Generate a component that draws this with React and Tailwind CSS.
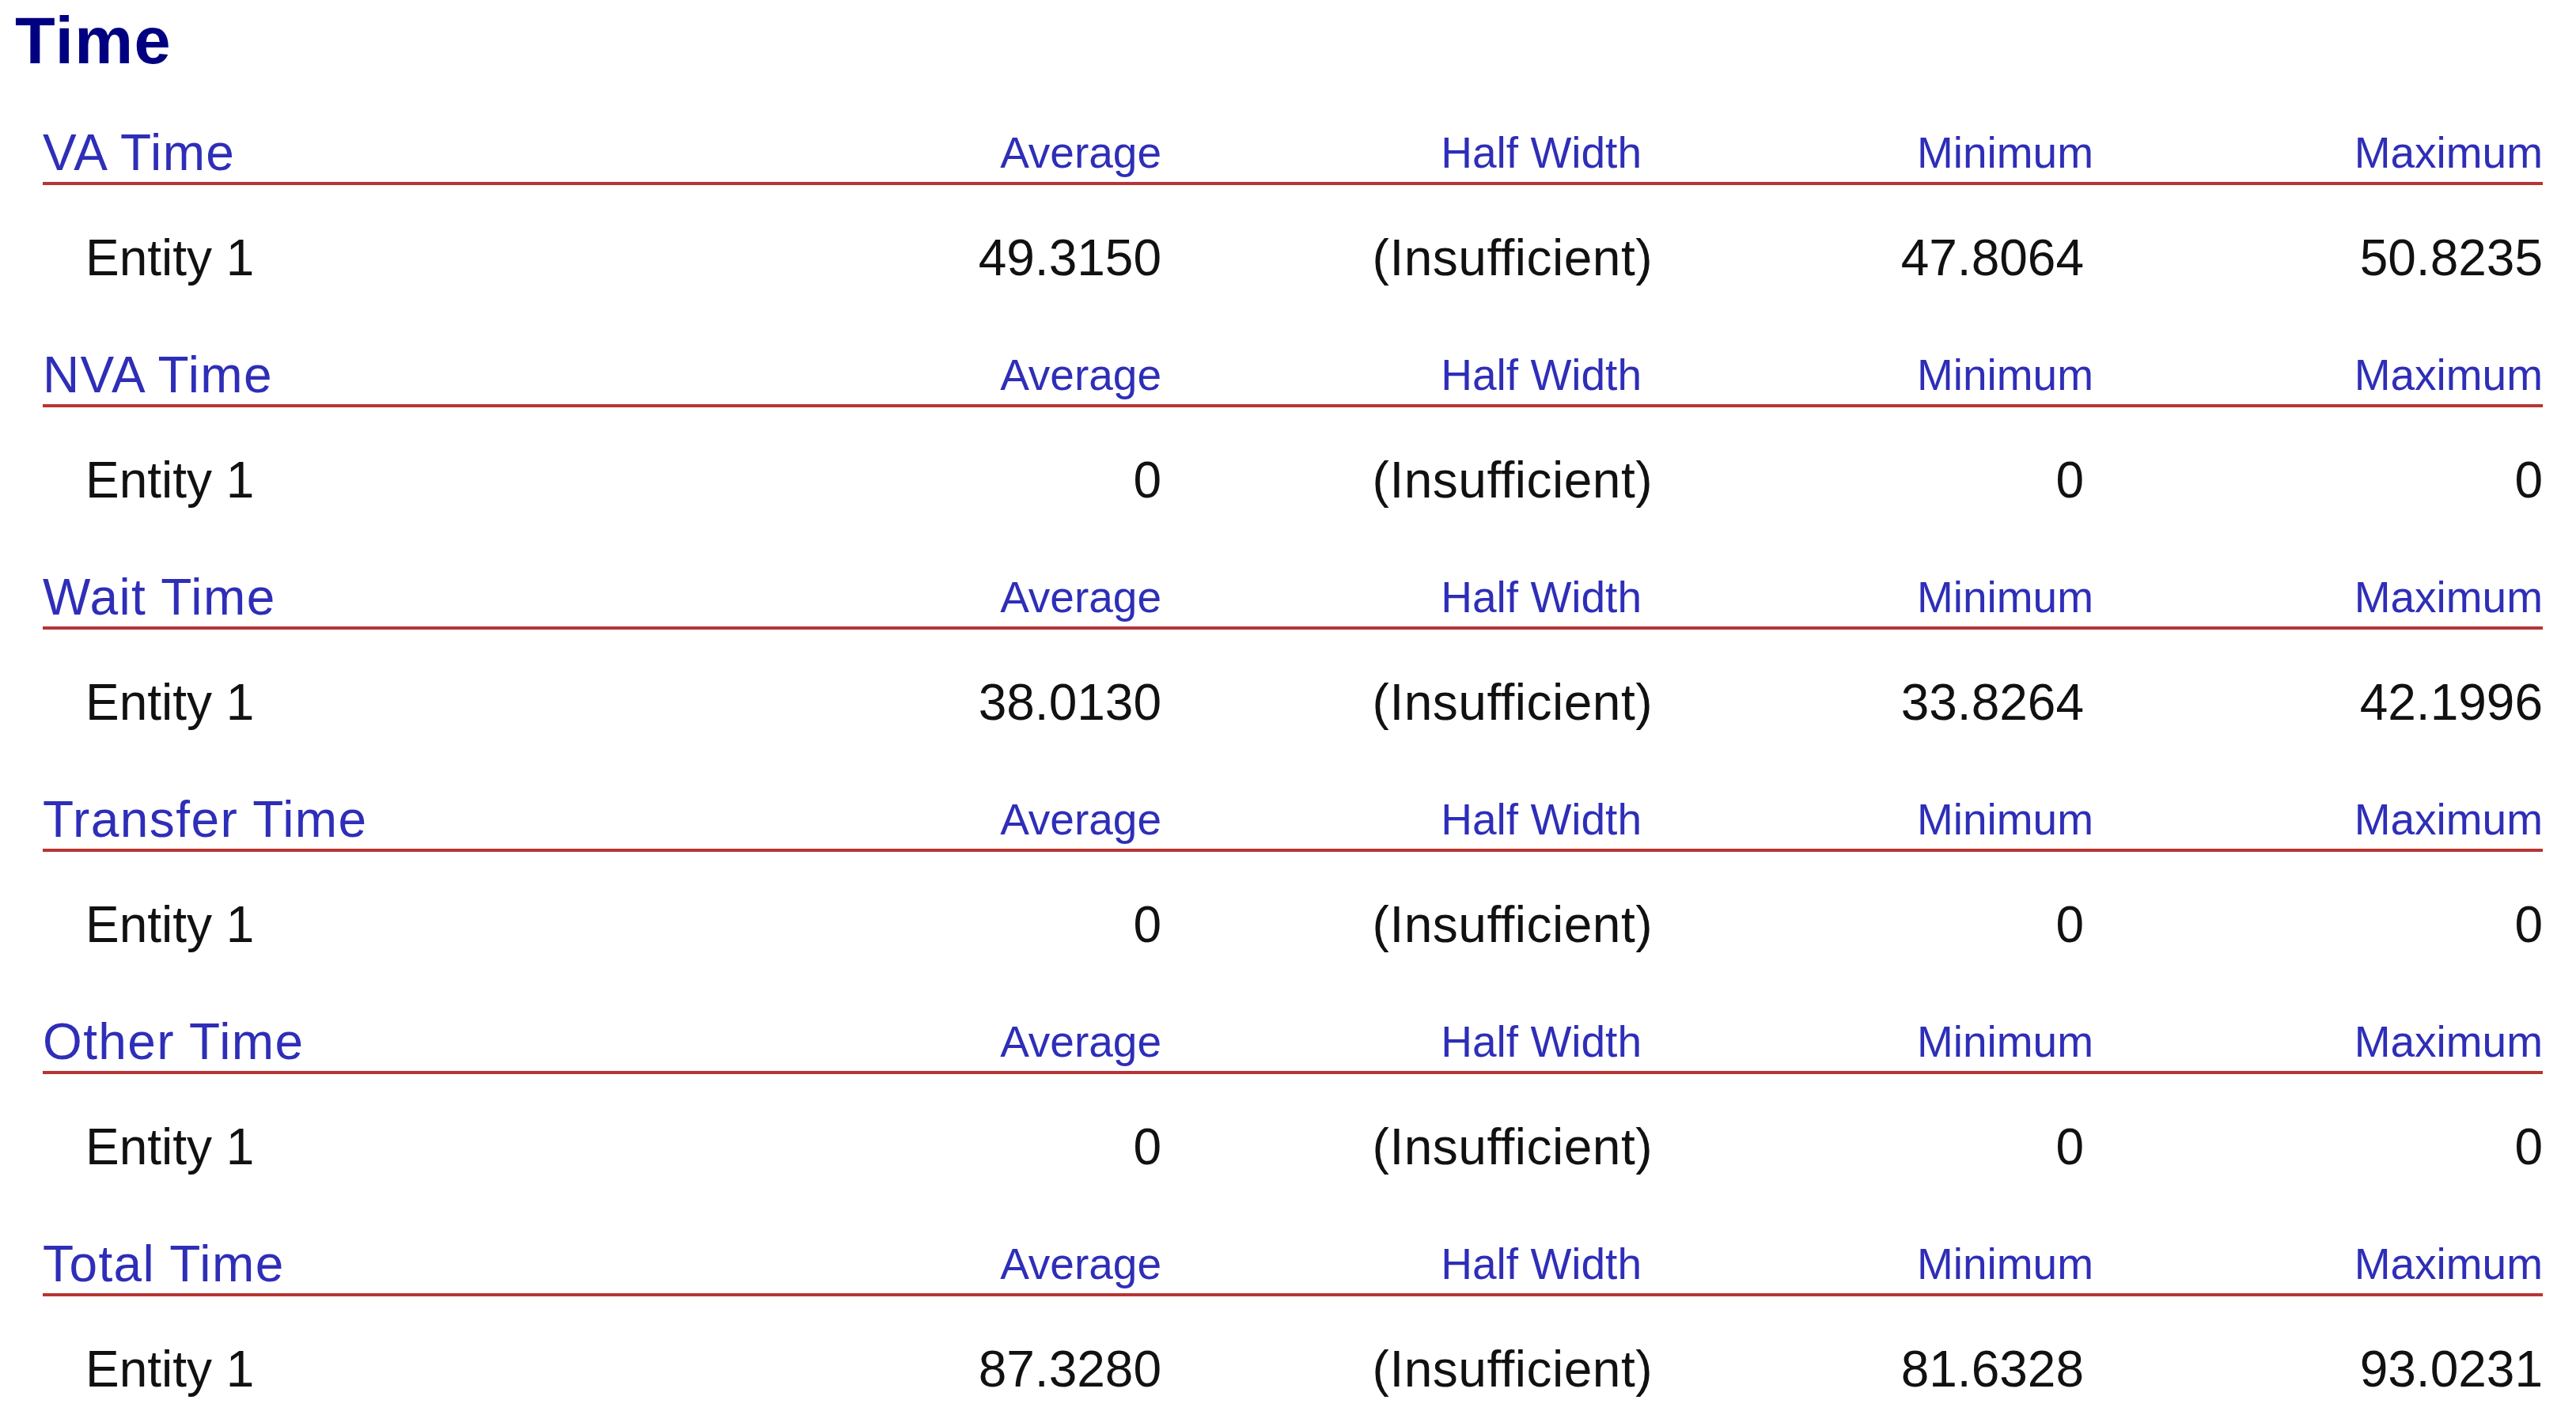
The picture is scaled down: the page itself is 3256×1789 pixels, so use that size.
import React from 'react';

const sections = [
  { name: 'VA Time', avg: '49.3150', min: '47.8064', max: '50.8235' },
  { name: 'NVA Time', avg: '0', min: '0', max: '0' },
  { name: 'Wait Time', avg: '38.0130', min: '33.8264', max: '42.1996' },
  { name: 'Transfer Time', avg: '0', min: '0', max: '0' },
  { name: 'Other Time', avg: '0', min: '0', max: '0' },
  { name: 'Total Time', avg: '87.3280', min: '81.6328', max: '93.0231' },
];

function Section({ s }) {
  return (
    <div className="pb-[84px]">
      {/* header row with column labels */}
      <div className="grid grid-cols-[1fr_414px_621px_557px_568px] items-end border-b-4 border-[#b83434] pb-[5px] text-[#2e2eb8]">
        <div className="text-[64px] leading-none tracking-[1.4px]">{s.name}</div>
        <div className="text-right text-[55px] leading-none pb-[4px]">Average</div>
        <div className="text-right text-[55px] leading-none pb-[4px] pr-[14px]">Half Width</div>
        <div className="text-right text-[55px] leading-none pb-[4px]">Minimum</div>
        <div className="text-right text-[55px] leading-none pb-[4px]">Maximum</div>
      </div>
      {/* entity row */}
      <div className="grid grid-cols-[1fr_414px_621px_557px_568px] mt-[60px] text-[64px] leading-none text-[#111]">
        <div className="pl-[54px]">Entity 1</div>
        <div className="text-right">{s.avg}</div>
        <div className="text-right tracking-[0.5px]">(Insufficient)</div>
        <div className="text-right pr-[12px]">{s.min}</div>
        <div className="text-right">{s.max}</div>
      </div>
    </div>
  );
}

export default function App() {
  return (
    <div className="w-[3256px] min-h-[1789px] bg-white pt-[10px] font-['Liberation_Sans',Arial,sans-serif]">
      <h1 className="pl-[19px] text-[83px] leading-none font-bold tracking-[1.5px] text-[#000080]">Time</h1>
      <div className="ml-[54px] w-[3160px] mt-[68px]">
        {sections.map((s) => (
          <Section key={s.name} s={s} />
        ))}
      </div>
    </div>
  );
}
